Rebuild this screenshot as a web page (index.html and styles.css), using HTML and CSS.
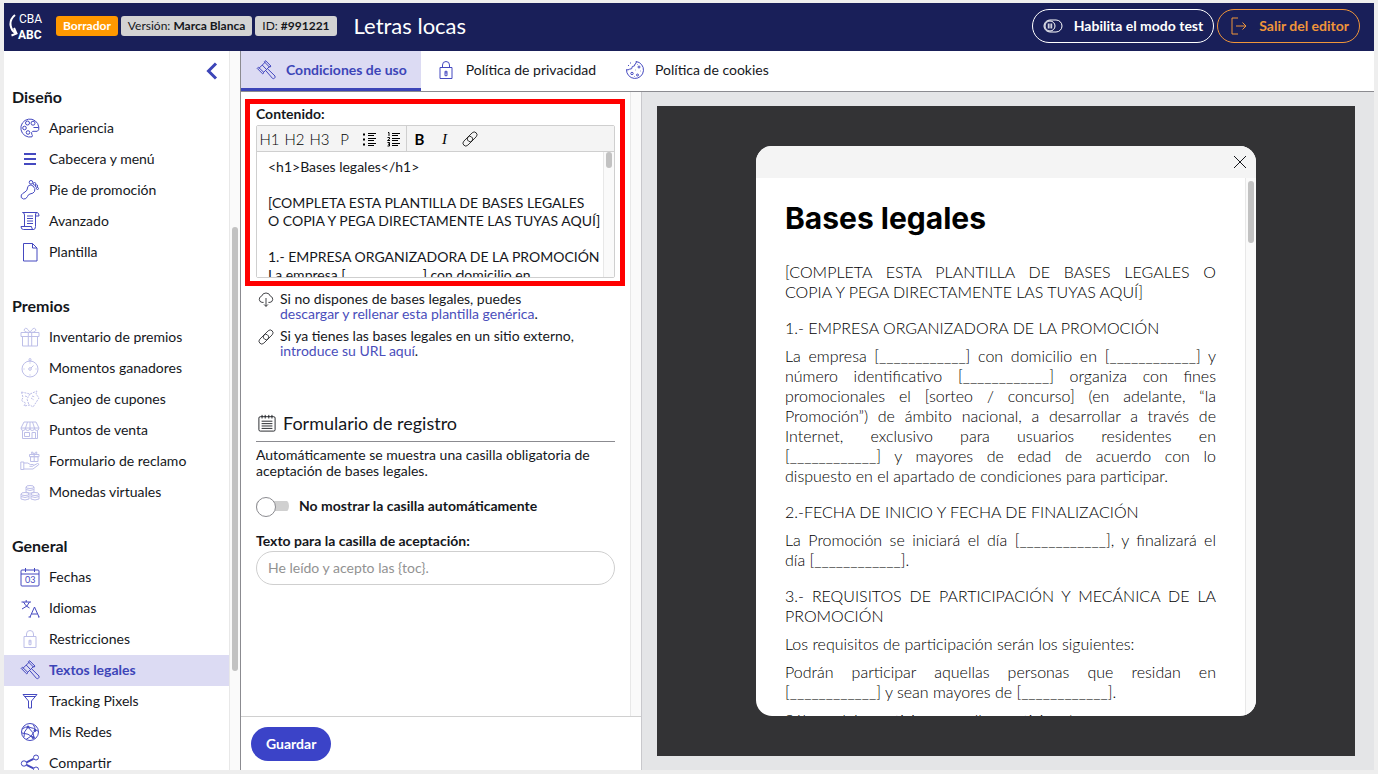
FILE: index.html
```html
<!DOCTYPE html>
<html lang="es">
<head>
<meta charset="utf-8">
<meta name="viewport" content="width=device-width, initial-scale=1">
<title>Letras locas</title>
<link rel="stylesheet" href="styles.css">
</head>
<body>
<svg class="sprite" aria-hidden="true">
  <symbol id="gavel" viewBox="0 0 20 20">
    <path d="M2.6 8.6 9.6 1.8M7.2 12.8l6.6-6.6M1.2 8.4l1.2-1.2 5.6 5.4-1.3 1.3zM8.3 1.8 9.6.7l5.4 5.4-1.3 1.2zM6.2 5l4.4 4.6M9.6 10.4l1.8-1.8 7.6 7.4q.4 1.6-.5 2.2-1 .8-2 .2L9.6 10.4"/>
  </symbol>
  <symbol id="lock" viewBox="0 0 20 20">
    <path d="M4 7.5h12v11H4zM6.5 7.5V5a3.5 3.5 0 0 1 7 0v2.5M9 11.3h2v1.6H9zM9 12.9v2.8h2v-2.8"/>
  </symbol>
  <symbol id="link" viewBox="0 0 20 20">
    <path d="M8 12.500a3.300 3.300 0 0 0 4.700-.200l5-5a3.500 3.500 0 0 0-5-5L7.600 7.400a3.300 3.300 0 0 0 .4 5.100M12 7.500a3.300 3.300 0 0 0-4.700.200l-5 5a3.500 3.500 0 0 0 5 5l5.100-5.100a3.300 3.300 0 0 0-.4-5.100"/>
  </symbol>
</svg>

<header class="topbar">
  <svg class="logo" viewBox="0 0 34 36" role="img" aria-label="CBA ABC">
    <text class="logo-light" x="10" y="15">CBA</text>
    <text class="logo-bold" x="9" y="31">ABC</text>
    <path d="M6 7Q1 11 1.500 17q1 6 5 8M2.500 27.500l5-2L5 20"/>
  </svg>
  <div class="badges">
    <span class="badge badge-draft">Borrador</span>
    <span class="badge">Versión: <b>Marca Blanca</b></span>
    <span class="badge">ID: <b>#991221</b></span>
  </div>
  <h1 class="title">Letras locas</h1>
  <div class="actions">
    <button class="pill" type="button">
      <svg class="icon" viewBox="0 0 20 20"><rect x="1" y="4" width="18" height="12" rx="6"/><circle cx="7" cy="10" r="5"/><path d="M5.300 7.500v5M7 7.500v5M8.700 7.500v5"/></svg>
      Habilita el modo test
    </button>
    <button class="pill pill-exit" type="button">
      <svg class="icon" viewBox="0 0 20 20"><path d="M10 2H4v16h6M8 10h10M14.500 6.500 18 10l-3.500 3.500"/></svg>
      Salir del editor
    </button>
  </div>
</header>

<div class="workspace">
  <div class="side">
    <nav class="menu">
      <div class="collapse-row">
        <button class="collapse" type="button" aria-label="Contraer menú"><svg viewBox="0 0 12 18"><path d="M10 1.500 2.500 9 10 16.500"/></svg></button>
      </div>
      <section class="group">
        <h2>Diseño</h2>
        <a href="#"><svg class="icon" viewBox="0 0 20 20"><path d="M18.800 9A9 9 0 1 0 12 18.800q1-1-.2-2.500-1-2 1-3h4.500q2-1 1.500-4.300M13.500 9.500h5"/><circle cx="7.500" cy="5" r="2"/><circle cx="13" cy="5.200" r="2"/><circle cx="4.500" cy="10" r="1.800"/><circle cx="8" cy="14.500" r="1.800"/></svg>Apariencia</a>
        <a href="#"><svg class="icon" viewBox="0 0 20 20"><path class="thick" d="M4 5h12M4 10h12M4 15h12"/></svg>Cabecera y menú</a>
        <a href="#"><svg class="icon" viewBox="0 0 20 20"><path d="M9 5.500Q11 4 13 6q3 2.500 1.500 5.500-1 2-4.500 2.500-2 .5-2.500 2.500Q6 19.500 3.500 19 0 18 1.300 15q1-1.500 3.700-3Q7.500 10.500 7.500 8q0-1.800 1.500-2.500"/><circle cx="11" cy="2.300" r="1.800"/><circle cx="14.500" cy="3.800" r="1.300"/><circle cx="16.500" cy="6" r="1.200"/><circle cx="17.500" cy="8.500" r="1"/></svg>Pie de promoción</a>
        <a href="#"><svg class="icon" viewBox="0 0 20 20"><path d="M4.500 15V4q0-2.500-2-2.500H17q2 0 2 3.500h-3.500M15.500 3v12.500q0 3-2 3-2 0-2-3H1q0 3 2.500 3h10M17 1.500q-1.500 0-1.500 2.500M7 5h6M7 7.500h6M7 10h6M7 12.500h6"/></svg>Avanzado</a>
        <a href="#"><svg class="icon" viewBox="0 0 20 20"><path d="M3.500 1.500h9l4.500 4.500v13H3.500zM12.500 1.500V6H17"/></svg>Plantilla</a>
      </section>
      <section class="group muted">
        <h2>Premios</h2>
        <a href="#"><svg class="icon" viewBox="0 0 20 20"><path d="M1 5.500h18v4H1zM2.500 9.500h15v9.500h-15zM8.300 5.500V19M11.700 5.500V19M9 5.500Q3 5 4.500 2 6.500-.5 10 5.500 13.500-.5 15.500 2 17 5 11 5.500"/></svg>Inventario de premios</a>
        <a href="#"><svg class="icon" viewBox="0 0 20 20"><circle cx="10" cy="11" r="8"/><circle cx="10" cy="11" r="1.300"/><circle cx="10" cy="1.500" r="1"/><path d="m11 10 2.500-2.500M10 4.500v1M10 16.500v1M3.500 11h1M15.500 11h1M8.500 3h3"/></svg>Momentos ganadores</a>
        <a href="#"><svg class="icon" viewBox="0 0 20 20"><path stroke-dasharray="2 1" d="M1.500 3 10 5l7-3-1 3 3 4-6 9-3-2-6 1 1.500-3-4-2.500 1.500-3zM10 5l-3 5 2 6M5 7l3 1M11 9l3 2M12 7l3 1"/></svg>Canjeo de cupones</a>
        <a href="#"><svg class="icon" viewBox="0 0 20 20"><path d="M4 2h12l3 6H1zM1 8q0 2.500 2.200 2.500T5.500 8q0 2.500 2.200 2.500T10 8q0 2.500 2.200 2.500T14.500 8q0 2.500 2.200 2.500T19 8M2.500 10.500v8h15v-8M12 18.500v-6h3.500v6M4.500 12.500h5v4h-5zM7.500 2 5.500 8M10 2v6M12.500 2l2 6"/></svg>Puntos de venta</a>
        <a href="#"><svg class="icon" viewBox="0 0 20 20"><path d="M9.500 3.500h9.500v2.200H9.500zM10.500 5.700h7.500v4.800h-7.500zM14.200 3.500v7M14.200 3.500q-4-.5-2.500-2.500 1.500-.5 2.500 2.500 1-3 2.500-2.500 1.500 2-2.500 2.500M.8 11h3v7.500h-3zM3.800 12h4l2.500 1.500h3q1 1-.5 1.800H9.500M13.500 14.500l4-2q1.500 0 1.200 1.200L13 18H3.800"/></svg>Formulario de reclamo</a>
        <a href="#"><svg class="icon" viewBox="0 0 20 20"><ellipse cx="10" cy="5" rx="4" ry="1.500"/><path d="M6 5v5q4 2.500 8 0V5M6 7.500q4 2 8 0M1 12v5q4 2 8 0v-5M1 14.500q4 2 8 0M11 12v5q4 2 8 0v-5M11 14.500q4 2 8 0"/><ellipse cx="5" cy="12" rx="4" ry="1.500"/><ellipse cx="15" cy="12" rx="4" ry="1.500"/></svg>Monedas virtuales</a>
      </section>
      <section class="group">
        <h2>General</h2>
        <a href="#"><svg class="icon" viewBox="0 0 20 20"><rect x="1" y="3" width="18" height="16" rx="1"/><path d="M1 7h18M5.500 1v4M14.500 1v4"/><text x="5" y="16">03</text></svg>Fechas</a>
        <a href="#"><svg class="icon" viewBox="0 0 20 20"><path d="M1.500 4H11M6.200 2v2M9.500 4Q8 8.500 2 11M3.500 4Q5.500 8.500 9.500 10M10 19l4.500-10L19 19M11.500 16h6M8.500 19H11M18 19h1.500"/></svg>Idiomas</a>
        <a href="#" class="off"><svg class="icon"><use href="#lock"/></svg>Restricciones</a>
        <a href="#" class="current"><svg class="icon"><use href="#gavel"/></svg>Textos legales</a>
        <a href="#"><svg class="icon" viewBox="0 0 20 20"><path d="M3 3.500h14L11.500 10v7H8.500v-7zM4.500 5.500h11"/></svg>Tracking Pixels</a>
        <a href="#"><svg class="icon" viewBox="0 0 20 20"><circle cx="10" cy="10" r="8.500"/><path d="M2 7q4-2.500 6-2 6 .5 10.500 4.500M8 5q-5 5-4 10M8 5q6 5 6.500 11.500M13 2.500Q15.500 5 15 8.500 12 15 6 17.500M2 11q6 0 12 5"/><circle class="dot" cx="8" cy="5" r="1"/><circle class="dot" cx="15" cy="8.500" r="1"/><circle class="dot" cx="13" cy="15.500" r="1"/></svg>Mis Redes</a>
        <a href="#"><svg class="icon" viewBox="0 0 20 20"><circle cx="4" cy="10.500" r="2.700"/><circle cx="16" cy="4.500" r="2.500"/><circle cx="16" cy="16.500" r="2.500"/><path class="thick" d="m6.500 9.300 7-3.500M6.500 11.800l7 3.500"/></svg>Compartir</a>
      </section>
    </nav>
    <div class="track side-track"><span></span></div>
  </div>

  <main class="main">
    <nav class="tabs">
      <a href="#" class="tab tab-current"><svg class="icon"><use href="#gavel"/></svg>Condiciones de uso</a>
      <a href="#" class="tab"><svg class="icon"><use href="#lock"/></svg>Política de privacidad</a>
      <a href="#" class="tab"><svg class="icon" viewBox="0 0 20 20"><path d="M11 1.500a8.500 8.500 0 1 1-9.500 8q1.500 1 3-.3 3 .3 2.800-2.700 3 0 2.700-2.500Q12 3.500 11 1.500"/><circle cx="14" cy="7" r="1"/><circle cx="7" cy="13.500" r="1.200"/><circle cx="12.500" cy="15" r="1"/><path d="M10 10h.5M15.500 11h.5M12 4.500h.5M9 16.500h.5M3 5.500h1M5 3h1"/></svg>Política de cookies</a>
    </nav>

    <div class="columns">
      <form class="editor">
        <div class="scroller">
          <div class="fields">
            <div class="content-field">
              <label for="content">Contenido:</label>
              <div class="rich">
                <div class="toolbar">
                  <button type="button">H1</button><button type="button">H2</button><button type="button">H3</button><button type="button">P</button>
                  <button type="button" aria-label="Lista"><svg viewBox="0 0 16 16"><path d="M6 2.500h8M6 4.500h6M6 7.500h8M6 9.500h6M6 12.500h8M6 14.500h6"/><path class="bullets" d="M1 3.500h2M1 8.500h2M1 13.500h2"/></svg></button>
                  <button type="button" aria-label="Lista numerada" class="ends"><svg viewBox="0 0 16 16"><path d="M6 2.500h8M6 4.500h6M6 7.500h8M6 9.500h6M6 12.500h8M6 14.500h6M2 1.500h1V5M1.500 6.500h2v1.500l-2 1.500h2.500M1.500 11.500h2V15h-2M2 13.200h1.500"/></svg></button>
                  <button type="button" class="strong">B</button><button type="button" class="italic">I</button>
                  <button type="button" aria-label="Enlace"><svg class="icon"><use href="#link"/></svg></button>
                </div>
                <div class="area">
                  <textarea id="content" spellcheck="false">&lt;h1>Bases legales&lt;/h1>

[COMPLETA ESTA PLANTILLA DE BASES LEGALES
O COPIA Y PEGA DIRECTAMENTE LAS TUYAS AQUÍ]

1.- EMPRESA ORGANIZADORA DE LA PROMOCIÓN
La empresa [____________] con domicilio en</textarea>
                  <div class="track"><span></span></div>
                </div>
              </div>
            </div>

            <div class="hints">
              <p><svg class="icon" viewBox="0 0 20 20"><path d="M7 13H5a4 4 0 0 1-.5-7.800 5.800 5.800 0 0 1 11 0A4 4 0 0 1 15 13h-2M10 7.500v10.500M7.500 15.500 10 18l2.500-2.500"/></svg><span>Si no dispones de bases legales, puedes<br><a href="#">descargar y rellenar esta plantilla genérica</a>.</span></p>
              <p><svg class="icon"><use href="#link"/></svg><span>Si ya tienes las bases legales en un sitio externo,<br><a href="#">introduce su URL aquí</a>.</span></p>
            </div>

            <h2 class="form-title"><svg class="icon" viewBox="0 0 20 20"><rect x="1" y="3" width="18" height="16" rx="1.500"/><path d="M4.500 1v4M8 1v4M12 1v4M15.500 1v4M4 8h12M4 10.700h12M4 13.300h12M4 16h12"/></svg>Formulario de registro</h2>
            <p class="note">Automáticamente se muestra una casilla obligatoria de aceptación de bases legales.</p>
            <label class="switch"><input type="checkbox">No mostrar la casilla automáticamente</label>
            <label for="accept" class="accept-label">Texto para la casilla de aceptación:</label>
            <input id="accept" class="accept" type="text" placeholder="He leído y acepto las {toc}.">
          </div>
          <div class="track"></div>
        </div>
        <footer class="save-row"><button class="save" type="button">Guardar</button></footer>
      </form>

      <section class="preview">
        <div class="stage">
          <article class="modal">
            <div class="modal-head"><button type="button" aria-label="Cerrar"><svg viewBox="0 0 14 14"><path d="m1 1 12 12M13 1 1 13"/></svg></button></div>
            <div class="modal-body">
              <div class="legal">
                <h1>Bases legales</h1>
                <p><span class="full">[COMPLETA ESTA PLANTILLA DE BASES LEGALES O</span> COPIA Y PEGA DIRECTAMENTE LAS TUYAS AQUÍ]</p>
                <p class="part">1.- EMPRESA ORGANIZADORA DE LA PROMOCIÓN</p>
                <p><span class="full">La empresa [____________] con domicilio en [____________] y número identificativo [____________] organiza con fines promocionales el [sorteo / concurso] (en adelante, “la Promoción”) de ámbito nacional, a desarrollar a través de</span> <span class="full">Internet, exclusivo para usuarios residentes en</span> <span class="full">[____________] y mayores de edad de acuerdo con lo</span> dispuesto en el apartado de condiciones para participar.</p>
                <p class="part">2.-FECHA DE INICIO Y FECHA DE FINALIZACIÓN</p>
                <p><span class="full">La Promoción se iniciará el día [____________], y finalizará el</span> día [____________].</p>
                <p class="part">3.- REQUISITOS DE PARTICIPACIÓN Y MECÁNICA DE LA PROMOCIÓN</p>
                <p>Los requisitos de participación serán los siguientes:</p>
                <p>Podrán participar aquellas personas que residan en [____________] y sean mayores de [____________].</p>
                <p>Sólo podrán participar aquellas participantes</p>
              </div>
              <div class="track modal-track"><span></span></div>
            </div>
          </article>
        </div>
      </section>
    </div>
  </main>
</div>
</body>
</html>
```

FILE: styles.css
```css
* { box-sizing: border-box; }

body {
  margin: 0;
  height: 100vh;
  padding: 3px 4px 4px;
  display: flex;
  flex-direction: column;
  overflow: hidden;
  background: #eeeeee;
  color: #15171c;
  font: 14px/16px Lato, "Open Sans", sans-serif;
}

h1, h2, p { margin: 0; }
a { color: inherit; text-decoration: none; }
button, input, textarea { font: inherit; color: inherit; }
button { padding: 0; border: 0; background: none; }
svg { display: block; flex: none; fill: none; stroke: currentColor; }

.sprite { position: absolute; width: 0; height: 0; }
.icon { width: 20px; height: 20px; }
.thick { stroke-width: 2; }
.dot { fill: currentColor; }

.track {
  flex: none;
  width: 11px;
  padding: 0 2px;
  border-left: 1px solid #e8e8e8;
  background: #fafafa;
}
.track span {
  display: block;
  width: 6px;
  height: 16px;
  border-radius: 3px;
  background: #c2c2c2;
}

/* Top bar */
.topbar {
  flex: none;
  height: 48px;
  padding: 0 14px 2px 5px;
  display: flex;
  align-items: center;
  background: #191f59;
  color: #ffffff;
}
.logo { width: 34px; height: 36px; stroke-width: 2; }
.logo text { fill: #ffffff; stroke: none; font-family: Roboto, sans-serif; font-size: 12px; }
.logo .logo-bold { font-weight: 700; }
.badges { display: flex; gap: 3px; margin-left: 13px; }
.badge {
  height: 20px;
  padding: 0 7px;
  border-radius: 3px;
  background: #d3d3d3;
  color: #15171c;
  font-size: 12px;
  line-height: 20px;
  white-space: nowrap;
}
.badge-draft { background: #ff9800; color: #ffffff; font-weight: 700; }
.title { margin-left: 17px; font-size: 22px; line-height: 28px; font-weight: 400; }
.actions { display: flex; gap: 3px; margin-left: auto; }
.pill {
  height: 34px;
  padding: 0 10px;
  display: flex;
  align-items: center;
  gap: 11px;
  border: 1px solid currentColor;
  border-radius: 17px;
  font-weight: 700;
}
.pill-exit { color: #f0953a; }

/* Sidebar */
.workspace { flex: 1; min-height: 0; display: flex; }
.side {
  flex: none;
  width: 237px;
  display: flex;
  overflow: hidden;
  border-right: 1px solid #8b8b90;
  background: #ffffff;
}
.menu { flex: 1; overflow: hidden; }
.collapse-row { height: 32px; padding: 11px 11px 0 0; display: flex; justify-content: flex-end; }
.collapse { width: 12px; height: 18px; color: #3c45b8; }
.collapse svg { width: 12px; height: 18px; stroke-width: 3; }
.group { margin-bottom: 24px; }
.group h2 { height: 30px; padding-left: 8px; font-size: 16px; line-height: 28px; font-weight: 700; }
.group a { height: 31px; padding: 0 0 2px 16px; display: flex; align-items: center; gap: 9px; }
.group .icon { color: #4549c0; }
.group text { fill: currentColor; stroke: none; font-size: 9px; }
.muted .icon, .off .icon { opacity: 0.35; }
.group .current { background: #dcdbf3; color: #3c45b8; font-weight: 700; }
.side-track { padding-top: 176px; }
.side-track span { height: 444px; }

/* Tabs */
.main { flex: 1; min-width: 0; display: flex; flex-direction: column; background: #ffffff; }
.tabs { flex: none; height: 41px; display: flex; border-bottom: 1px solid #8b8b90; }
.tab { padding: 0 14px 3px 15px; display: flex; align-items: center; gap: 10px; }
.tab .icon { color: #4549c0; }
.tab-current {
  padding-bottom: 0;
  border-bottom: 3px solid #3c45b8;
  background: #dcdbf3;
  color: #3c45b8;
  font-weight: 700;
}

/* Editor column */
.columns { flex: 1; min-height: 0; display: flex; }
.editor { flex: none; width: 401px; display: flex; flex-direction: column; border-right: 1px solid #c8c8cc; }
.scroller { flex: 1; min-height: 0; display: flex; }
.fields { flex: 1; padding: 13px 15px 0; overflow: hidden; }
.content-field { position: relative; }
.content-field::after {
  content: "";
  position: absolute;
  inset: -6px -10px -8px -11px;
  border: 5px solid #ff0000;
  pointer-events: none;
}
.content-field label, .accept-label { display: block; font-weight: 700; }
.content-field label { line-height: 18px; padding-bottom: 2px; }
.rich { border: 1px solid #cfcfcf; border-radius: 2px; }
.toolbar { height: 26px; display: flex; border-bottom: 1px solid #cfcfcf; background: #f4f4f4; }
.toolbar button {
  width: 25px;
  display: flex;
  align-items: center;
  justify-content: center;
  color: #000000;
  font-size: 15px;
  font-weight: 300;
}
.toolbar svg { width: 16px; height: 16px; }
.toolbar .bullets { stroke-width: 2; }
.toolbar .ends { border-right: 1px solid #cfcfcf; }
.toolbar .strong { font-weight: 700; }
.toolbar .italic { font-family: "Liberation Serif", serif; font-style: italic; }
.area { height: 125px; display: flex; }
.area textarea {
  flex: 1;
  min-width: 0;
  padding: 6px 0 0 11px;
  border: 0;
  outline: 0;
  resize: none;
  overflow: hidden;
  background: #ffffff;
  line-height: 18px;
  white-space: pre;
}
.hints { margin-top: 13px; display: grid; gap: 7px; line-height: 15px; }
.hints p { display: flex; gap: 6px; padding-left: 2px; }
.hints .icon { width: 16px; height: 18px; }
.hints a { color: #4a4ebb; }
.form-title {
  margin-top: 49px;
  height: 35px;
  padding: 0 0 2px 2px;
  display: flex;
  align-items: center;
  gap: 7px;
  border-bottom: 1px solid #8b8b90;
  font-size: 18px;
  font-weight: 400;
}
.form-title .icon { width: 18px; height: 18px; }
.note { margin-top: 5px; }
.switch { margin-top: 18px; display: flex; align-items: center; gap: 10px; font-weight: 700; }
.switch input {
  appearance: none;
  width: 33px;
  height: 18px;
  margin: 0;
  background: linear-gradient(#d0d0d0, #d0d0d0) center / 100% 10px no-repeat;
  border-radius: 9px;
}
.switch input::before {
  content: "";
  display: block;
  width: 18px;
  height: 18px;
  border: 1px solid #8b8b90;
  border-radius: 50%;
  background: #ffffff;
}
.accept-label { margin-top: 18px; }
.accept {
  width: 100%;
  height: 34px;
  margin-top: 2px;
  padding: 0 11px 2px;
  border: 1px solid #cfcfcf;
  border-radius: 17px;
  background: #ffffff;
}
.accept::placeholder { color: #929292; }
.save-row { flex: none; height: 54px; padding: 10px; border-top: 1px solid #d0d0d0; }
.save {
  height: 34px;
  padding: 0 15px;
  border-radius: 17px;
  background: #3b43c8;
  color: #ffffff;
  font-weight: 700;
}

/* Preview */
.preview { flex: 1; min-width: 0; padding: 14px 19px 14px 15px; display: flex; background: #e4e5e7; }
.stage { flex: 1; padding: 40px 16px; display: flex; justify-content: center; background: #333335; }
.modal {
  width: 500px;
  display: flex;
  flex-direction: column;
  overflow: hidden;
  border-radius: 16px;
  background: #ffffff;
}
.modal-head {
  flex: none;
  height: 32px;
  padding-right: 9px;
  display: flex;
  align-items: center;
  justify-content: flex-end;
  background: #f4f4f4;
}
.modal-head svg { width: 14px; height: 14px; }
.modal-body { flex: 1; min-height: 0; display: flex; }
.legal {
  flex: 1;
  padding: 22px 29px 0;
  overflow: hidden;
  color: #000000;
  font-size: 16px;
  line-height: 20px;
  font-weight: 300;
  text-align: justify;
}
.legal h1 { margin-bottom: 26px; font: 700 30px/36px Inter, sans-serif; }
.legal p { margin-top: 8px; }
.legal .part { margin-top: 16px; }
.legal .full { display: block; text-align-last: justify; }
.modal-track { padding-top: 3px; }
.modal-track span { height: 62px; }
```
